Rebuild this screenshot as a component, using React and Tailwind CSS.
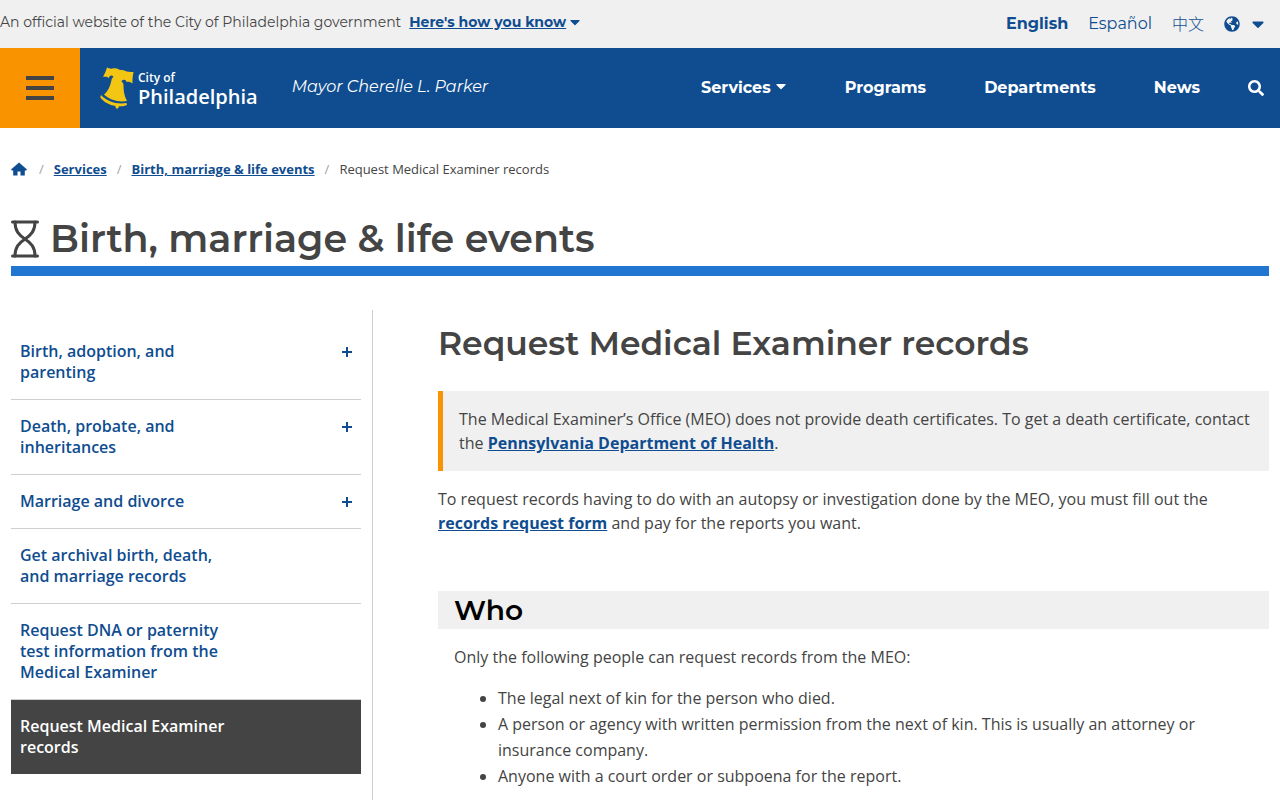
import { FaCaretDown, FaGlobeAmericas, FaSearch } from 'react-icons/fa';

const sidebarItems = [
  { label: 'Birth, adoption, and parenting', expandable: true },
  { label: 'Death, probate, and inheritances', expandable: true },
  { label: 'Marriage and divorce', expandable: true },
  { label: 'Get archival birth, death, and marriage records' },
  { label: 'Request DNA or paternity test information from the Medical Examiner' },
  { label: 'Request Medical Examiner records', current: true },
];

const linkClass = 'font-bold text-[#0f4d90] underline';

function GovBanner() {
  return (
    <div className="flex h-12 items-center justify-between bg-[#f0f0f0] pr-4 font-['Montserrat','Inter',sans-serif] text-[#0f4d90]">
      <div className="flex items-center gap-2 pb-1 text-[14px]">
        <span className="text-[#444444]">An official website of the City of Philadelphia government</span>
        <button type="button" className="flex items-center gap-1 font-bold">
          <span className="underline">Here's how you know</span>
          <FaCaretDown className="h-4 w-2.5" />
        </button>
      </div>
      <div className="flex items-center gap-5 text-[16px]">
        <a href="#en" className="font-bold">English</a>
        <a href="#es">Español</a>
        <a href="#zh" className="pb-0.5 font-['Noto_Sans_CJK_SC',sans-serif] font-light leading-6">中文</a>
        <button type="button" aria-label="More languages" className="flex items-center gap-3">
          <FaGlobeAmericas className="h-4 w-4" />
          <FaCaretDown className="h-5 w-3" />
        </button>
      </div>
    </div>
  );
}

function Logo() {
  return (
    <a href="#home" className="flex items-center gap-1 font-['Open_Sans',sans-serif] font-semibold text-white">
      <svg viewBox="0 0 34 42" className="h-[42px] w-[34px]" fill="#f3c613" aria-hidden="true">
        <path d="M7 .5c2 1 3.500 1.500 5.500 1C15 1 17 1.500 19 2.500c2 .8 4 .3 6 1.200 2 1 5 1.300 8.500 1.300-.8 4-1.200 7.500-1 11.500-2-1.500-4-2-6-1.500-.3-3-4.500-3-5-.5 1.500 1 2 2 2 4 0 5 .5 10 3.500 15.500C18 35.500 9 32.500 4 27.500c4-3 6.500-9 7.500-14.500.2-1.500 1-2.500 2-3-.8-2.500-4.500-2-4.500 1C7 9.500 5 9.500 3 10c1.500-3 3-6 4-9.500z" />
        <path d="M1 28c6 6.500 16 9.800 25.500 8l.5 2c-2 1-5 1.500-8 1.300-.3 1.500-1.200 2.500-2.300 2.300-1-.2-1.300-1.300-1.200-2.600C9.500 38 3.500 35 .3 30.500z" />
      </svg>
      <span className="flex flex-col pt-0.5">
        <span className="text-[12px] leading-4">City of</span>
        <span className="text-[20px] leading-[22px]">Philadelphia</span>
      </span>
    </a>
  );
}

function Header() {
  return (
    <header className="flex h-20 items-center bg-[#0f4d90] pr-4 font-['Montserrat','Inter',sans-serif] text-white">
      <button
        type="button"
        aria-label="Menu"
        className="flex h-20 w-20 shrink-0 items-center justify-center bg-[#f99300] text-[#444444]"
      >
        <svg viewBox="0 0 28 24" className="h-6 w-7" fill="currentColor" aria-hidden="true">
          <path d="M0 0h28v4H0zM0 10h28v4H0zM0 20h28v4H0z" />
        </svg>
      </button>
      <div className="ml-5">
        <Logo />
      </div>
      <p className="ml-[34px] pb-0.5 text-[16px] italic">Mayor Cherelle L. Parker</p>
      <nav className="ml-auto flex items-center gap-[58px] text-[16px] font-bold">
        <button type="button" className="flex items-center gap-1">
          Services
          <FaCaretDown className="mb-1 h-4 w-3" />
        </button>
        <a href="#programs">Programs</a>
        <a href="#departments">Departments</a>
        <a href="#news">News</a>
      </nav>
      <button type="button" aria-label="Search" className="ml-12">
        <FaSearch className="h-4 w-4" />
      </button>
    </header>
  );
}

function HomeIcon() {
  return (
    <svg viewBox="0 0 16 14" className="mr-0.5 h-3.5 w-4" fill="currentColor" aria-hidden="true">
      <path d="M8 .5 16 7.500 15.200 8.500H13.800V13.500H9.500V9.500H6.500V13.500H2.200V8.500H.8L0 7.500z" />
    </svg>
  );
}

function Breadcrumbs() {
  return (
    <nav aria-label="Breadcrumb" className="mt-[31px] flex items-center gap-2.5 text-[13px] leading-5">
      <a href="#home" aria-label="Home" className="text-[#0f4d90]">
        <HomeIcon />
      </a>
      <span className="text-[#a1a1a1]">/</span>
      <a href="#services" className={linkClass}>Services</a>
      <span className="text-[#a1a1a1]">/</span>
      <a href="#events" className={linkClass}>Birth, marriage &amp; life events</a>
      <span className="text-[#a1a1a1]">/</span>
      <span>Request Medical Examiner records</span>
    </nav>
  );
}

function Hourglass() {
  return (
    <svg viewBox="0 0 28 38" className="h-[38px] w-7" fill="none" stroke="currentColor" strokeWidth="3" strokeLinecap="round" aria-hidden="true">
      <path d="M1.500 2h25M1.500 36h25" />
      <path d="M4 2c0 9 4 13 10 17 6-4 10-8 10-17M4 36c0-9 4-13 10-17 6 4 10 8 10 17" />
    </svg>
  );
}

function PlusIcon() {
  return (
    <svg viewBox="0 0 10 10" className="mt-1.5 h-2.5 w-2.5" fill="currentColor" aria-hidden="true">
      <path d="M4 0h2v4h4v2H6v4H4V6H0V4h4z" />
    </svg>
  );
}

function Sidebar() {
  return (
    <aside className="w-[362px] shrink-0 border-r border-[#cfcfcf] pr-[11px] pt-[15px]">
      <ul className="text-[16px] font-semibold leading-[21px]">
        {sidebarItems.map((item) => (
          <li key={item.label} className="border-b border-[#cfcfcf] last:border-b-0">
            <a
              href="#item"
              className={`flex items-start justify-between px-[9px] py-4 ${
                item.current ? 'bg-[#444444] text-white' : 'text-[#0f4d90]'
              }`}
            >
              <span className="w-[216px]">{item.label}</span>
              {item.expandable && <PlusIcon />}
            </a>
          </li>
        ))}
      </ul>
    </aside>
  );
}

function Content() {
  return (
    <main className="ml-[65px] flex-1 text-[16px] leading-6">
      <h2 className="mt-3 font-['Montserrat','Inter',sans-serif] text-[33px] font-semibold leading-[42px]">
        Request Medical Examiner records
      </h2>
      <div className="mt-[27px] border-l-[5px] border-[#f99300] bg-[#f0f0f0] p-4">
        The Medical Examiner’s Office (MEO) does not provide death certificates. To get a death certificate, contact the{' '}
        <a href="#health" className={linkClass}>Pennsylvania Department of Health</a>.
      </div>
      <p className="mt-4">
        To request records having to do with an autopsy or investigation done by the MEO, you must fill out the{' '}
        <a href="#form" className={linkClass}>records request form</a> and pay for the reports you want.
      </p>
      <section className="mt-14">
        <h3 className="bg-[#f0f0f0] px-4 font-['Montserrat','Inter',sans-serif] text-[28px] font-semibold leading-[38px] text-black">
          Who
        </h3>
        <div className="px-4 pt-4">
          <p>Only the following people can request records from the MEO:</p>
          <ul className="mt-4 list-disc pl-11 leading-[26px]">
            <li>The legal next of kin for the person who died.</li>
            <li>
              A person or agency with written permission from the next of kin. This is usually an attorney or insurance
              company.
            </li>
            <li>Anyone with a court order or subpoena for the report.</li>
          </ul>
        </div>
      </section>
    </main>
  );
}

function App() {
  return (
    <div className="flex min-h-screen flex-col bg-white font-['Open_Sans',sans-serif] text-[#444444]">
      <GovBanner />
      <Header />
      <div className="flex flex-1 flex-col px-[11px]">
        <Breadcrumbs />
        <h1 className="mt-[35px] flex items-center gap-[11px] border-b-10 border-[#2176d2] pb-0.5 font-['Montserrat','Inter',sans-serif] text-[38px] font-semibold leading-[50px]">
          <Hourglass />
          Birth, marriage &amp; life events
        </h1>
        <div className="mt-[34px] flex flex-1">
          <Sidebar />
          <Content />
        </div>
      </div>
    </div>
  );
}

export default App;
